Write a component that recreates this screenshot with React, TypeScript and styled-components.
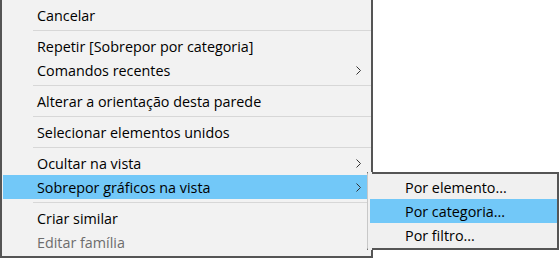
import React from "react";
import styled, { createGlobalStyle } from "styled-components";

const Global = createGlobalStyle`
  html, body { margin: 0; padding: 0; background: #ffffff; }
  body { font-family: "Open Sans", "Noto Sans", sans-serif; }
`;

const Menu = styled.div`
  position: relative;
  width: 373px;
  box-sizing: border-box;
  background: #f2f2f2;
  border-left: 2px solid #555555;
  border-right: 2px solid #555555;
  border-bottom: 2px solid #555555;
  padding: 3px 0 2px 1px;
  font-size: 14.35px;
  color: #000;
`;

const Item = styled.div<{ $active?: boolean; $disabled?: boolean; $pad?: number }>`
  position: relative;
  height: 24px;
  display: flex;
  align-items: center;
  padding-left: ${(p) => p.$pad ?? 34}px;
  padding-right: 10px;
  white-space: nowrap;
  background: ${(p) => (p.$active ? "#72c8f8" : "transparent")};
  color: ${(p) => (p.$disabled ? "#6d6d6d" : "#000")};
`;

const Label = styled.span`
  flex: 1;
`;

const Separator = styled.div`
  height: 1px;
  margin: 3px 0 3px 30px;
  background: #d7d7d7;
`;

const SubMenu = styled.div`
  position: absolute;
  left: 364px;
  top: -3px;
  width: 192px;
  box-sizing: border-box;
  background: #f0f0f0;
  border-left: 1px solid #c8c8c8;
  border-top: 2px solid #555555;
  border-right: 2px solid #555555;
  border-bottom: 2px solid #555555;
  padding: 1px 0 1px 2px;
  z-index: 2;
  &::before,
  &::after {
    content: "";
    position: absolute;
    left: 0;
    width: 4px;
    height: 2px;
    background: #f0f0f0;
  }
  &::before { top: -2px; }
  &::after { bottom: -2px; }
`;

const Chevron = () => (
  <svg width="5" height="9" viewBox="0 0 5 9" style={{ display: "block" }}>
    <polyline points="0.5,0.5 4.5,4.5 0.5,8.5" fill="none" stroke="#333" strokeWidth="1" />
  </svg>
);

export default function App() {
  return (
    <>
      <Global />
      <Menu>
        <Item><Label>Cancelar</Label></Item>
        <Separator />
        <Item><Label>Repetir [Sobrepor por categoria]</Label></Item>
        <Item><Label>Comandos recentes</Label><Chevron /></Item>
        <Separator />
        <Item><Label>Alterar a orientação desta parede</Label></Item>
        <Separator />
        <Item><Label>Selecionar elementos unidos</Label></Item>
        <Separator />
        <Item><Label>Ocultar na vista</Label><Chevron /></Item>
        <Item $active>
          <Label>Sobrepor gráficos na vista</Label>
          <Chevron />
          <SubMenu>
            <Item $pad={35}><Label>Por elemento...</Label></Item>
            <Item $pad={35} $active><Label>Por categoria...</Label></Item>
            <Item $pad={35}><Label>Por filtro...</Label></Item>
          </SubMenu>
        </Item>
        <Separator />
        <Item><Label>Criar similar</Label></Item>
        <Item $disabled><Label>Editar família</Label></Item>
      </Menu>
    </>
  );
}
